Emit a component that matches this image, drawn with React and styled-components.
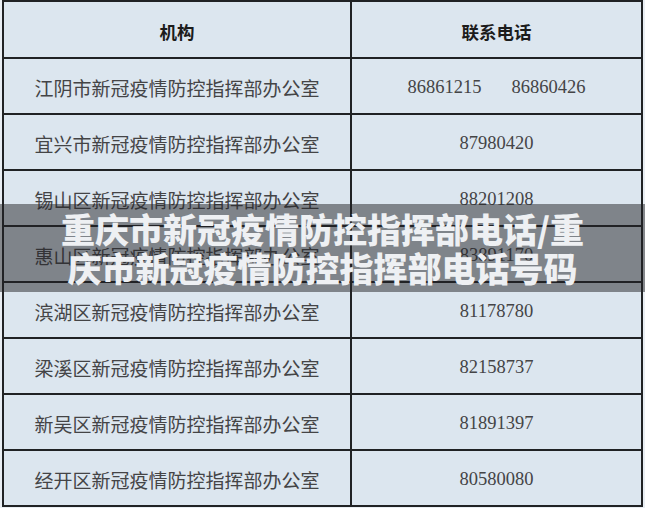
import React from 'react';
import styled, { createGlobalStyle } from 'styled-components';

const lineColor = '#202224';
const cellBg = '#dce6ef';
const textColor = '#444446';

const GlobalStyle = createGlobalStyle`
    html, body {
        margin: 0;
        padding: 0;
        background-color: #e9eef3;
    }
    body {
        width: 645px;
        height: 508px;
        overflow: hidden;
    }
`;

const Page = styled.div`
    position: relative;
    width: 645px;
    height: 508px;
`;

const Table = styled.div`
    display: grid;
    grid-template-columns: 346px 289px;
    grid-template-rows: 55px;
    grid-auto-rows: 54px;
    gap: 2px;
    padding: 2px;
    margin-left: 2px;
    width: fit-content;
    background-color: ${lineColor};
`;

const HeadCell = styled.div`
    display: flex;
    align-items: center;
    justify-content: center;
    background-color: ${cellBg};
    color: #1c1c1c;
    font-family: "Noto Sans CJK SC", sans-serif;
    font-size: 17.5px;
    font-weight: 700;
    padding-top: 3px;
`;

const NameCell = styled.div`
    display: flex;
    align-items: center;
    justify-content: center;
    background-color: ${cellBg};
    color: ${textColor};
    font-family: "Noto Sans CJK SC", sans-serif;
    font-size: 19px;
    font-weight: 400;
    padding-top: 2px;
`;

const PhoneCell = styled.div`
    display: flex;
    align-items: center;
    justify-content: center;
    gap: 30px;
    background-color: ${cellBg};
    color: ${textColor};
    font-family: "Liberation Serif", "Noto Sans CJK SC", serif;
    font-size: 18.5px;
    padding-top: 2px;
`;

const Banner = styled.div`
    position: absolute;
    left: 0;
    right: 0;
    top: 204px;
    height: 88px;
    display: flex;
    align-items: center;
    justify-content: center;
    background-color: rgba(34, 34, 38, 0.5);
`;

const Title = styled.h1`
    margin: 0;
    max-width: 545px;
    color: #eef0f3;
    font-family: "Noto Sans CJK SC", sans-serif;
    font-size: 34px;
    font-weight: 900;
    line-height: 39px;
    text-align: center;
`;

const rows = [
    { name: '江阴市新冠疫情防控指挥部办公室', phones: ['86861215', '86860426'] },
    { name: '宜兴市新冠疫情防控指挥部办公室', phones: ['87980420'] },
    { name: '锡山区新冠疫情防控指挥部办公室', phones: ['88201208'] },
    { name: '惠山区新冠疫情防控指挥部办公室', phones: ['83891170'] },
    { name: '滨湖区新冠疫情防控指挥部办公室', phones: ['81178780'] },
    { name: '梁溪区新冠疫情防控指挥部办公室', phones: ['82158737'] },
    { name: '新吴区新冠疫情防控指挥部办公室', phones: ['81891397'] },
    { name: '经开区新冠疫情防控指挥部办公室', phones: ['80580080'] },
];

const App = () => {
    return (
        <>
            <GlobalStyle />
            <Page>
                <Table>
                    <HeadCell>机构</HeadCell>
                    <HeadCell>联系电话</HeadCell>
                    {rows.map((row) => (
                        <React.Fragment key={row.name}>
                            <NameCell>{row.name}</NameCell>
                            <PhoneCell>
                                {row.phones.map((p) => <span key={p}>{p}</span>)}
                            </PhoneCell>
                        </React.Fragment>
                    ))}
                </Table>

                <Banner>
                    <Title>重庆市新冠疫情防控指挥部电话/重庆市新冠疫情防控指挥部电话号码</Title>
                </Banner>
            </Page>
        </>
    )
}

export default App
